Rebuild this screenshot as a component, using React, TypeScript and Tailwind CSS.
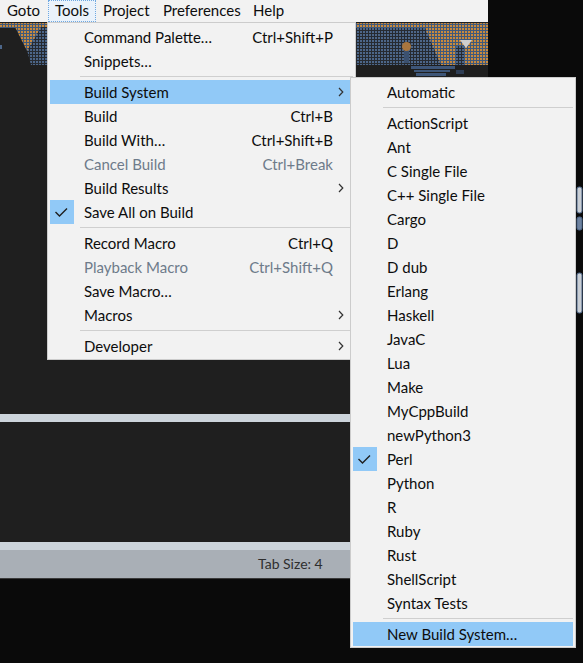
import React from "react";

type Item =
  | { sep: true }
  | {
      sep?: false;
      label: string;
      shortcut?: string;
      arrow?: boolean;
      disabled?: boolean;
      checked?: boolean;
      active?: boolean;
    };

const tools: Item[] = [
  { label: "Command Palette…", shortcut: "Ctrl+Shift+P" },
  { label: "Snippets…" },
  { sep: true },
  { label: "Build System", arrow: true, active: true },
  { label: "Build", shortcut: "Ctrl+B" },
  { label: "Build With…", shortcut: "Ctrl+Shift+B" },
  { label: "Cancel Build", shortcut: "Ctrl+Break", disabled: true },
  { label: "Build Results", arrow: true },
  { label: "Save All on Build", checked: true },
  { sep: true },
  { label: "Record Macro", shortcut: "Ctrl+Q" },
  { label: "Playback Macro", shortcut: "Ctrl+Shift+Q", disabled: true },
  { label: "Save Macro…" },
  { label: "Macros", arrow: true },
  { sep: true },
  { label: "Developer", arrow: true },
];

const builds: Item[] = [
  { label: "Automatic" },
  { sep: true },
  { label: "ActionScript" },
  { label: "Ant" },
  { label: "C Single File" },
  { label: "C++ Single File" },
  { label: "Cargo" },
  { label: "D" },
  { label: "D dub" },
  { label: "Erlang" },
  { label: "Haskell" },
  { label: "JavaC" },
  { label: "Lua" },
  { label: "Make" },
  { label: "MyCppBuild" },
  { label: "newPython3" },
  { label: "Perl", checked: true },
  { label: "Python" },
  { label: "R" },
  { label: "Ruby" },
  { label: "Rust" },
  { label: "ShellScript" },
  { label: "Syntax Tests" },
  { sep: true },
  { label: "New Build System…", active: true },
];

function Check() {
  return (
    <svg width="24" height="24" viewBox="0 0 24 24">
      <polyline
        points="5.5,12 9.5,16 17,8.5"
        fill="none"
        stroke="#1f1f1f"
        strokeWidth="1.4"
      />
    </svg>
  );
}

function Chevron() {
  return (
    <svg width="6" height="10" viewBox="0 0 6 10">
      <polyline
        points="1,1 4.8,5 1,9"
        fill="none"
        stroke="#333"
        strokeWidth="1.2"
      />
    </svg>
  );
}

function Menu({ items, withShortcuts }: { items: Item[]; withShortcuts: boolean }) {
  return (
    <div className="flex flex-col px-[2px] pt-[2px] pb-[1px]">
      {items.map((it, i) => {
        if (it.sep) {
          return (
            <div key={i} className="flex h-[7px]">
              <div className="h-full w-[28px] shrink-0 bg-[radial-gradient(#e6e6e6_0.6px,transparent_0.7px)] bg-[length:4px_4px]" />
              <div className="ml-[2px] flex flex-1 items-center">
                <div className="h-[1px] w-full bg-[#cfcfcf]" />
              </div>
            </div>
          );
        }
        return (
          <div
            key={i}
            className={
              it.active
                ? "flex h-[24px] items-center bg-[#91c9f7]"
                : "flex h-[24px] items-center"
            }
          >
            <div
              className={
                it.active
                  ? "flex h-full w-[28px] shrink-0 items-center"
                  : "flex h-full w-[28px] shrink-0 items-center bg-[radial-gradient(#e6e6e6_0.6px,transparent_0.7px)] bg-[length:4px_4px]"
              }
            >
              {it.checked && (
                <div className="flex h-[24px] w-[24px] items-center justify-center bg-[#91c9f7]">
                  <Check />
                </div>
              )}
            </div>
            <span
              className={
                it.disabled
                  ? "ml-[6px] flex-1 text-[#6e7b8a]"
                  : "ml-[6px] flex-1 text-[#0d0d0d]"
              }
            >
              {it.label}
            </span>
            {withShortcuts && it.shortcut && (
              <span className={it.disabled ? "text-[#6e7b8a]" : "text-[#0d0d0d]"}>
                {it.shortcut}
              </span>
            )}
            {withShortcuts && (
              <span className="flex w-[20px] shrink-0 items-center pl-[5px]">
                {it.arrow && <Chevron />}
              </span>
            )}
          </div>
        );
      })}
    </div>
  );
}

function TopGraphic() {
  return (
    <svg width="488" height="56" viewBox="0 0 488 56" className="block">
      <defs>
        <pattern id="od" width="3" height="3" patternUnits="userSpaceOnUse">
          <rect width="3" height="3" fill="#40597a" />
          <rect x="0" y="0" width="2" height="2" fill="#c98a3c" />
        </pattern>
        <pattern id="bd" width="3" height="3" patternUnits="userSpaceOnUse">
          <rect width="3" height="3" fill="#262a30" />
          <rect x="0" y="0" width="2" height="2" fill="#4c6689" />
        </pattern>
      </defs>
      {/* left */}
      <rect x="0" y="1" width="47" height="5" fill="url(#od)" />
      <polygon points="40,5 47,5 47,43 31,43 27,28" fill="url(#bd)" />
      <polygon points="15,5 41,5 27,29" fill="url(#od)" />
      <rect x="0" y="23" width="2" height="4" fill="#4c6689" />
      {/* right */}
      <rect x="356" y="1" width="132" height="5" fill="url(#od)" />
      <rect x="356" y="6" width="84" height="37" fill="url(#bd)" />
      <polygon points="425,6 488,6 488,43 441,43" fill="url(#od)" />
      <rect x="456" y="24" width="8" height="19" fill="url(#bd)" />
      <polygon points="460,18 472,18 466,26" fill="#cfcfcf" />
      <circle cx="406.5" cy="24.5" r="4.5" fill="#a8763f" />
      <rect x="404" y="29" width="5" height="12" fill="#3b5170" />
      <rect x="411" y="44" width="44" height="3" fill="#3e5678" />
      <rect x="414" y="48" width="36" height="2" fill="#3e5678" />
      <rect x="416" y="51" width="30" height="3" fill="#3e5678" />
      <rect x="456" y="48" width="8" height="4" fill="#2f3e55" />
    </svg>
  );
}

export default function App() {
  return (
    <div className="relative h-[663px] w-[583px] overflow-hidden bg-[#0a0a0a] text-[15px] leading-[24px] [font-family:Lato,'Open_Sans',sans-serif]">
      <div className="flex w-[488px] flex-col">
        {/* menu bar */}
        <div className="flex h-[22px] items-center bg-[#f2f2f2] leading-[21px] text-[#0d0d0d]">
          <div className="h-full w-[48px] pl-[7px]">Goto</div>
          <div className="h-full w-[48px] border border-dotted border-[#6fa8e0] bg-[#eaf2fb] pl-[6px]">
            <span className="relative top-[-1px]">Tools</span>
          </div>
          <div className="h-full w-[60px] pl-[7px]">Project</div>
          <div className="h-full w-[90px] pl-[7px]">Preferences</div>
          <div className="h-full w-[45px] pl-[7px]">Help</div>
        </div>
        {/* editor */}
        <div className="h-[392px] bg-[#1f1f1f]">
          <TopGraphic />
        </div>
        <div className="h-[8px] bg-[#ccd4db]" />
        <div className="h-[120px] bg-[#1f1f1f]" />
        <div className="h-[8px] bg-[#ccd4db]" />
        <div className="flex h-[28px] items-center bg-[#a9afb6] pl-[258px] text-[14px] text-[#2e2e2e]">
          Tab Size: 4
        </div>
        <div className="h-[1px] bg-[#3a3a3a]" />
      </div>

      {/* right edge artifacts */}
      <svg className="absolute left-[576px] top-[186px]" width="7" height="130" viewBox="0 0 7 130">
        <rect x="1" y="1" width="5" height="26" rx="2" fill="#c9ced4" stroke="#4c6689" strokeWidth="1" />
        <rect x="1" y="31" width="5" height="13" rx="2" fill="#6f83a0" stroke="#4c6689" strokeWidth="1" />
        <rect x="1" y="87" width="5" height="40" rx="2" fill="#c9ced4" stroke="#4c6689" strokeWidth="1" />
      </svg>

      {/* Tools menu */}
      <div className="absolute left-[47px] top-[22px] w-[309px] border border-[#cccccc] bg-[#f2f2f2]">
        <Menu items={tools} withShortcuts={true} />
      </div>

      {/* Build System submenu */}
      <div className="absolute left-[350px] top-[77px] w-[226px] border border-[#cccccc] bg-[#f2f2f2]">
        <Menu items={builds} withShortcuts={false} />
      </div>
    </div>
  );
}
